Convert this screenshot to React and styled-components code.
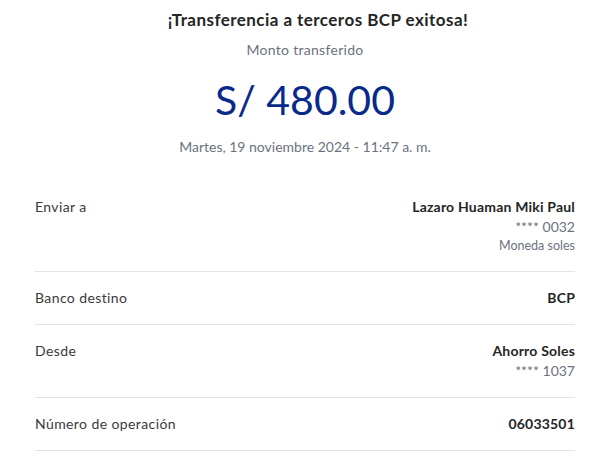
import React from 'react';
import styled, { createGlobalStyle } from 'styled-components';

const GlobalStyle = createGlobalStyle`
  html, body {
    margin: 0;
    padding: 0;
    background: #ffffff;
  }
  body {
    font-family: Lato, "Liberation Sans", sans-serif;
    -webkit-font-smoothing: antialiased;
  }
`;

const details = [
  {
    label: 'Enviar a',
    value: 'Lazaro Huaman Miki Paul',
    extra: ['**** 0032'],
    note: 'Moneda soles',
  },
  { label: 'Banco destino', value: 'BCP' },
  { label: 'Desde', value: 'Ahorro Soles', extra: ['**** 1037'] },
  { label: 'Número de operación', value: '06033501' },
];

export default function App() {
  return (
    <>
      <GlobalStyle />
      <Page>
        <Header>
          <Title>¡Transferencia a terceros BCP exitosa!</Title>
          <Caption>Monto transferido</Caption>
          <Amount>S/ 480.00</Amount>
          <DateText>Martes, 19 noviembre 2024 - 11:47 a. m.</DateText>
        </Header>
        <List>
          {details.map((d) => (
            <Row key={d.label}>
              <Label>{d.label}</Label>
              <Values>
                <Strong>{d.value}</Strong>
                {d.extra && d.extra.map((e) => <Sub key={e}>{e}</Sub>)}
                {d.note && <Note>{d.note}</Note>}
              </Values>
            </Row>
          ))}
        </List>
      </Page>
    </>
  );
}

const Page = styled.div`
  width: 615px;
  padding: 0 40px 0 35px;
  box-sizing: border-box;
`;

const Header = styled.div`
  display: flex;
  flex-direction: column;
  align-items: center;
  padding-top: 10px;
  padding-bottom: 24px;
`;

const Title = styled.h1`
  margin: 0 0 0 26px;
  font-size: 17px;
  line-height: 20px;
  font-weight: 700;
  letter-spacing: 0.45px;
  color: #252525;
`;

const Caption = styled.div`
  margin-top: 10px;
  font-size: 14px;
  line-height: 20px;
  letter-spacing: 0.3px;
  color: #6c7280;
`;

const Amount = styled.div`
  margin-top: 15px;
  font-size: 41px;
  line-height: 50px;
  font-weight: 400;
  color: #0a2a8a;
`;

const DateText = styled.div`
  margin-top: 12px;
  font-size: 14px;
  line-height: 20px;
  color: #6c7280;
`;

const List = styled.div`
  display: flex;
  flex-direction: column;
`;

const Row = styled.div`
  display: flex;
  justify-content: space-between;
  align-items: flex-start;
  padding: 16px 0 16px;
  border-bottom: 1px solid #e4e4e4;
`;

const Label = styled.div`
  font-size: 14px;
  line-height: 20px;
  letter-spacing: 0.4px;
  color: #3a3a3a;
`;

const Values = styled.div`
  display: flex;
  flex-direction: column;
  align-items: flex-end;
`;

const Strong = styled.div`
  font-size: 14px;
  line-height: 20px;
  font-weight: 700;
  letter-spacing: 0.2px;
  color: #252525;
`;

const Sub = styled.div`
  font-size: 14px;
  line-height: 20px;
  color: #6c7280;
`;

const Note = styled.div`
  font-size: 12.5px;
  line-height: 18px;
  color: #6c7280;
`;
